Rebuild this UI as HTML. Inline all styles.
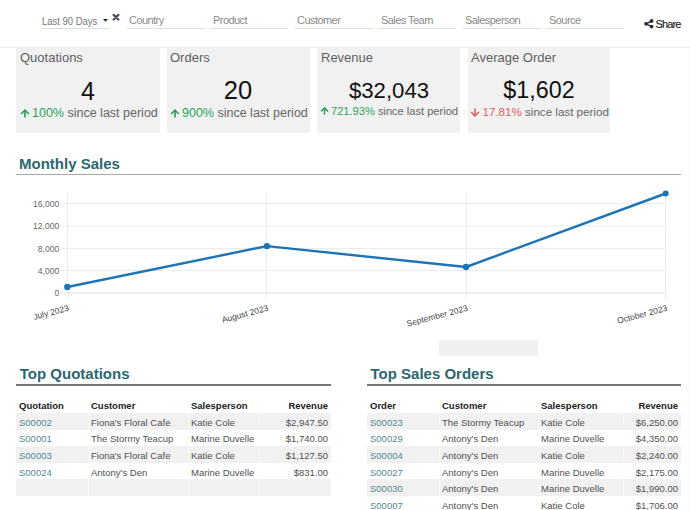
<!DOCTYPE html>
<html><head><meta charset="utf-8">
<style>
*{margin:0;padding:0;box-sizing:border-box}
html,body{width:690px;height:510px;overflow:hidden;background:#fff;font-family:"Liberation Sans",sans-serif}
.abs{position:absolute}
.topbar{position:absolute;left:0;top:0;width:690px;height:48px;background:#fff;border-bottom:1px solid #ebebeb}
.fld{position:absolute;top:13px;height:16px;padding-left:3px;border-bottom:1px solid #e0e0e0;font-size:11px;letter-spacing:-0.55px;color:#8a8a8a;line-height:15px}
.share{position:absolute;left:655.6px;top:16.8px;font-size:11px;letter-spacing:-0.9px;line-height:15px;color:#222;-webkit-text-stroke:0.15px #222}
.card{position:absolute;top:47px;width:144px;height:86px}
.cbg{position:absolute;top:48px;width:143px;height:85px;background:#f1f1f1}
.card .t{position:absolute;left:4px;top:3px;font-size:13px;color:#5f5f5f}
.card .v{position:absolute;left:0;width:100%;top:30px;text-align:center;font-size:24px;line-height:28px;color:#111}
.card .d{position:absolute;left:17px;top:58px;line-height:16px;color:#666;white-space:nowrap}
.up{color:#2aa35a}
.dn{color:#e06262}
h2{position:absolute;font-size:15px;font-weight:bold;color:#2b676f}
.rule{position:absolute;height:1px;background:#bdbdbd}
table{position:absolute;border-collapse:collapse;table-layout:fixed;font-size:9.5px;color:#505050}
td,th{height:16.6px;padding:3px 3px 0 3px;white-space:nowrap;line-height:10px}
th{font-weight:bold;text-align:left;color:#222}
tr.g td{background:#f1f1f1}
tr.g td+td{box-shadow:inset 1px 0 0 #f7f7f7}
a{color:#4f8a93;text-decoration:none}
.r{text-align:right}
</style></head><body>
<div class="topbar">
  <div class="fld" style="left:42px;width:66px;padding-left:0;letter-spacing:0;color:#777;line-height:16px"><span style="display:inline-block;transform:scaleX(0.86);transform-origin:0 0">Last 90 Days</span></div>
  <svg class="abs" style="left:0;top:0" width="690" height="47">
    <path d="M103 19H108L105.5 21.8Z" fill="#222"/>
    <path d="M113.6 14.9L118.4 19.5M118.4 14.9L113.6 19.5" stroke="#4a4f5a" stroke-width="2.3" stroke-linecap="round"/>
    <g fill="#2a2f38"><circle cx="646" cy="23.8" r="1.9"/><circle cx="651.6" cy="21" r="1.9"/><circle cx="651.6" cy="26.6" r="1.9"/>
    <path d="M646 23.8L651.6 21M646 23.8L651.6 26.6" stroke="#2a2f38" stroke-width="1.4"/></g>
  </svg>
  <div class="fld" style="left:126px;width:78px">Country</div>
  <div class="fld" style="left:210px;width:78px">Product</div>
  <div class="fld" style="left:294px;width:78px">Customer</div>
  <div class="fld" style="left:378px;width:78px">Sales Team</div>
  <div class="fld" style="left:462px;width:78px">Salesperson</div>
  <div class="fld" style="left:546px;width:78px">Source</div>
  <div class="share">Share</div>
</div>

<div class="cbg" style="left:16px;width:144px"></div><div class="cbg" style="left:167px"></div><div class="cbg" style="left:317px"></div><div class="cbg" style="left:468px;width:142px"></div>
<div class="card" style="left:16px"><div class="t">Quotations</div><div class="v" style="font-size:25px;top:29.5px">4</div><svg width="10" height="10" viewBox="0 0 10 10" style="position:absolute;left:4px;top:60.5px"><path d="M5 9.6V2.4M1.1 6L5 2.1L8.9 6" stroke="#2a9d55" stroke-width="1.6" fill="none"/></svg><div class="d" style="font-size:12.5px;left:16px"><span class="up">100%</span> since last period</div></div>
<div class="card" style="left:166px"><div class="t">Orders</div><div class="v" style="font-size:25.5px;top:29.3px">20</div><svg width="10" height="10" viewBox="0 0 10 10" style="position:absolute;left:4px;top:60.5px"><path d="M5 9.6V2.4M1.1 6L5 2.1L8.9 6" stroke="#2a9d55" stroke-width="1.6" fill="none"/></svg><div class="d" style="font-size:12.5px;left:16px"><span class="up">900%</span> since last period</div></div>
<div class="card" style="left:317px"><div class="t">Revenue</div><div class="v" style="font-size:22.2px;top:29.8px">$32,043</div><svg width="9" height="9" viewBox="0 0 10 10" style="position:absolute;left:3.2px;top:58.8px"><path d="M5 9.6V2.4M1.1 6L5 2.1L8.9 6" stroke="#2a9d55" stroke-width="1.6" fill="none"/></svg><div class="d" style="font-size:11.1px;left:14px;top:56px"><span class="up">721.93%</span> since last period</div></div>
<div class="card" style="left:467px"><div class="t">Average Order</div><div class="v" style="font-size:23.3px;top:29px">$1,602</div><svg width="10" height="10" viewBox="0 0 10 10" style="position:absolute;left:3px;top:59.5px"><path d="M5 1.4V8.6M1.1 5L5 8.9L8.9 5" stroke="#e06060" stroke-width="1.6" fill="none"/></svg><div class="d" style="font-size:11.6px;left:15.5px;top:56.7px"><span class="dn">17.81%</span> since last period</div></div>

<h2 style="left:19px;top:155px">Monthly Sales</h2>
<div class="rule" style="left:16px;top:174px;width:665px;background:#a8a8a8"></div>
<svg class="abs" style="left:0;top:0" width="690" height="510" viewBox="0 0 690 510">
 <g stroke="#ebebeb" stroke-width="1" fill="none">
  <path d="M61 203.5H666M61 226H666M61 248.5H666M61 270.5H666"/>
  <path d="M61 293H666" stroke="#dedede"/>
  <path d="M67.5 193V299M266.5 193V299M466.5 193V299M665.5 193V299"/>
 </g>
 <g font-family="Liberation Sans" font-size="8.6" fill="#666" text-anchor="end">
  <text x="59.3" y="206.6">16,000</text>
  <text x="59.3" y="229.1">12,000</text>
  <text x="59.3" y="251.6">8,000</text>
  <text x="59.3" y="273.6">4,000</text>
  <text x="59.3" y="296.1">0</text>
 </g>
 <g font-family="Liberation Sans" font-size="8.5" fill="#444" text-anchor="end" transform="translate(0.8,0)">
  <text transform="translate(68.5,310.5) rotate(-15)">July 2023</text>
  <text transform="translate(268,310.5) rotate(-15)">August 2023</text>
  <text transform="translate(467.5,310.5) rotate(-15)">September 2023</text>
  <text transform="translate(667,310.5) rotate(-15)">October 2023</text>
 </g>
 <polyline points="67.3,287 266.9,246.1 466,267 665.7,193.5" fill="none" stroke="#1f74b5" stroke-width="2.4" stroke-linejoin="round"/>
 <g fill="#1f74b5">
  <circle cx="67.3" cy="287" r="3.2"/><circle cx="266.9" cy="246.1" r="3.2"/><circle cx="466" cy="267" r="3.2"/><circle cx="665.7" cy="193.5" r="3"/>
 </g>
</svg>
<div class="abs" style="left:439px;top:340px;width:99px;height:16px;background:#f0f0f0"></div>
<div class="abs" style="left:689px;top:48px;width:1px;height:462px;background:#f5f5f5"></div>

<h2 style="left:19.8px;top:365.4px">Top Quotations</h2>
<div class="rule" style="left:16px;top:384px;width:315px;height:2px;background:#777"></div>
<h2 style="left:370.5px;top:365.4px">Top Sales Orders</h2>
<div class="rule" style="left:367px;top:384px;width:314px;height:2px;background:#777"></div>

<table style="left:16px;top:396.5px;width:315px">
<colgroup><col style="width:72px"><col style="width:100px"><col style="width:71px"><col></colgroup>
<tr><th>Quotation</th><th>Customer</th><th>Salesperson</th><th class="r">Revenue</th></tr>
<tr class="g"><td><a>S00002</a></td><td>Fiona's Floral Cafe</td><td>Katie Cole</td><td class="r">$2,947.50</td></tr>
<tr><td><a>S00001</a></td><td>The Stormy Teacup</td><td>Marine Duvelle</td><td class="r">$1,740.00</td></tr>
<tr class="g"><td><a>S00003</a></td><td>Fiona's Floral Cafe</td><td>Katie Cole</td><td class="r">$1,127.50</td></tr>
<tr><td><a>S00024</a></td><td>Antony's Den</td><td>Marine Duvelle</td><td class="r">$831.00</td></tr>
<tr class="g"><td></td><td></td><td></td><td></td></tr>
</table>

<table style="left:367px;top:396.5px;width:314px">
<colgroup><col style="width:72px"><col style="width:99px"><col style="width:85px"><col></colgroup>
<tr><th>Order</th><th>Customer</th><th>Salesperson</th><th class="r">Revenue</th></tr>
<tr class="g"><td><a>S00023</a></td><td>The Stormy Teacup</td><td>Katie Cole</td><td class="r">$6,250.00</td></tr>
<tr><td><a>S00029</a></td><td>Antony's Den</td><td>Marine Duvelle</td><td class="r">$4,350.00</td></tr>
<tr class="g"><td><a>S00004</a></td><td>Antony's Den</td><td>Katie Cole</td><td class="r">$2,240.00</td></tr>
<tr><td><a>S00027</a></td><td>Antony's Den</td><td>Marine Duvelle</td><td class="r">$2,175.00</td></tr>
<tr class="g"><td><a>S00030</a></td><td>Antony's Den</td><td>Marine Duvelle</td><td class="r">$1,990.00</td></tr>
<tr><td><a>S00007</a></td><td>Antony's Den</td><td>Katie Cole</td><td class="r">$1,706.00</td></tr>
</table>
</body></html>
